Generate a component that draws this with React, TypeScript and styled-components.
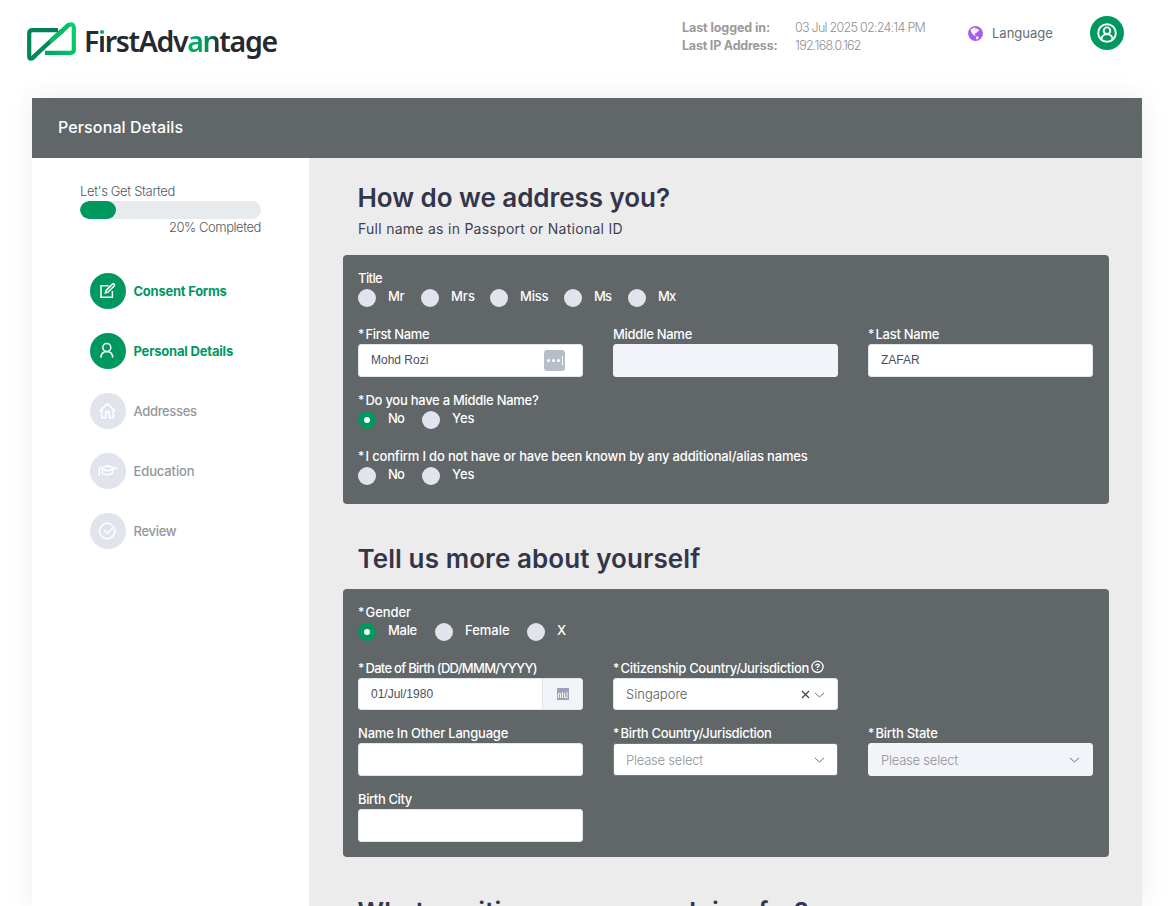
import React from 'react';
import styled, { createGlobalStyle, css } from 'styled-components';

const GREEN = '#00985f';
const SLATE = '#616668';
const MUTED = '#e1e4ec';

const GlobalStyle = createGlobalStyle`
  * { box-sizing: border-box; }
  body {
    margin: 0;
    height: 906px;
    overflow: hidden;
    background: #fff;
    font-family: Inter, "Liberation Sans", sans-serif;
    font-size: 13px;
    color: #646c75;
  }
`;

/* Text run with adjustable tracking */
const Text = styled.span<{ $ls?: number }>`
  white-space: nowrap;
  letter-spacing: ${p => p.$ls ?? 0}px;
`;

const Header = styled.header`
  display: flex;
  align-items: flex-start;
  height: 98px;
  padding: 16px 47px 0 27px;
`;

const Brand = styled.div`
  display: flex;
  align-items: flex-start;
  margin-top: 6px;
  svg { display: block; }
`;

const Wordmark = styled.div`
  margin-left: 7px;
  font-family: "Noto Sans", sans-serif;
  font-size: 28.5px;
  font-weight: 600;
  line-height: 39px;
  letter-spacing: -1.35px;
  color: #26292f;
  white-space: nowrap;
`;

const DottedI = styled.span`
  background: linear-gradient(to bottom, #00b164 0 13px, #26292f 13px);
  background-clip: text;
  color: transparent;
`;

const GreenPair = styled.span`
  background: linear-gradient(to right, #00b45f, #00935b 65%, #26292f);
  background-clip: text;
  color: transparent;
`;

const Session = styled.dl`
  display: grid;
  grid-template-columns: 113px 137px;
  margin: 3px 0 0 auto;
  line-height: 18px;
  dt { font-weight: 700; color: #9a9a9a; margin: 0; font-size: 12.5px; }
  dd { font-weight: 300; color: #8f8f8f; margin: 0; font-size: 12.5px; }
`;

const LanguageLink = styled.div`
  display: flex;
  align-items: center;
  gap: 9px;
  width: 122px;
  height: 34px;
  margin-left: 36px;
`;

const Avatar = styled.div`
  display: flex;
  align-items: center;
  justify-content: center;
  width: 34px;
  height: 34px;
  border-radius: 50%;
  background: ${GREEN};
`;

const Card = styled.main`
  width: 1110px;
  height: 808px;
  margin-left: 32px;
  box-shadow: 0 0 24px rgba(60, 60, 70, 0.09);
`;

const TitleBar = styled.div`
  display: flex;
  align-items: center;
  height: 60px;
  padding: 0 26px 2px;
  background: ${SLATE};
  color: #fff;
  font-size: 16px;
  font-weight: 500;
`;

const Columns = styled.div`
  display: flex;
  height: 748px;
  overflow: hidden;
`;

const Sidebar = styled.aside`
  width: 277px;
  padding: 25px 48px 0;
  background: #fff;
`;

const Progress = styled.div`
  display: flex;
  flex-direction: column;
  font-weight: 300;
  line-height: 16px;
  color: #55585c;
  & > span { height: 18px; }
  & > :last-child { align-self: flex-end; }
`;

const Track = styled.div`
  height: 18px;
  border-radius: 9px;
  background: #e8ebee;
  overflow: hidden;
`;

const Fill = styled.div`
  width: 20%;
  height: 100%;
  border-radius: 9px;
  background: ${GREEN};
`;

const Steps = styled.nav`
  display: flex;
  flex-direction: column;
  gap: 24px;
  margin: 36px 0 0 10px;
`;

const Step = styled.a<{ $done?: boolean }>`
  display: flex;
  align-items: center;
  gap: 7.5px;
  height: 36px;
  color: ${p => (p.$done ? GREEN : '#93979c')};
  font-weight: ${p => (p.$done ? 650 : 500)};
  & > :last-child { padding-bottom: 1px; }
`;

const StepDot = styled.span<{ $done?: boolean }>`
  display: flex;
  align-items: center;
  justify-content: center;
  width: 36px;
  height: 36px;
  border-radius: 50%;
  background: ${p => (p.$done ? GREEN : MUTED)};
`;

const Content = styled.section`
  flex: 1;
  padding: 20px 33px 0 34px;
  background: #ececec;
`;

const Heading = styled.h2<{ $gapTop?: boolean }>`
  margin: ${p => (p.$gapTop ? 35 : 0)}px 0 ${p => (p.$gapTop ? 11 : 0)}px 14.5px;
  font-size: 26px;
  font-weight: 600;
  line-height: 39px;
  color: #33364a;
`;

const SubHeading = styled.p`
  margin: 0 0 15px 15px;
  font-size: 14px;
  line-height: 23px;
  color: #3f4254;
`;

const Panel = styled.div`
  padding: 15px 15px 0;
  border-radius: 4px;
  background: ${SLATE};
`;

const Row = styled.div`
  display: grid;
  grid-template-columns: repeat(3, 225px);
  column-gap: 30px;
  padding-bottom: 15px;
`;

const Field = styled.div`
  display: flex;
  flex-direction: column;
`;

const Label = styled.label`
  display: flex;
  height: 18px;
  line-height: 16px;
  color: #fff;
  font-weight: 500;
  white-space: nowrap;
  svg { margin-left: 2px; flex: none; }
`;

const Star = styled.span`
  width: 7.5px;
  flex: none;
  font-size: 12px;
`;

const Options = styled.div`
  display: flex;
  height: 20px;
  margin-bottom: 18px;
`;

const Option = styled.div<{ $w: number }>`
  display: flex;
  gap: 12px;
  width: ${p => p.$w}px;
  line-height: 16px;
  color: #fff;
  font-weight: 500;
`;

const Radio = styled.span<{ $on?: boolean }>`
  display: flex;
  align-items: center;
  justify-content: center;
  width: 18px;
  height: 18px;
  margin-top: 1px;
  border-radius: 50%;
  background: ${p => (p.$on ? GREEN : MUTED)};
  ${p => p.$on && css`
    &::after {
      content: "";
      width: 6px;
      height: 6px;
      border-radius: 50%;
      background: #fff;
    }
  `}
`;

const Box = styled.div<{ $h?: number; $off?: boolean; $focus?: boolean; $sans?: boolean }>`
  display: flex;
  align-items: center;
  height: ${p => p.$h ?? 33}px;
  padding: 0 12px;
  border: 1px solid ${p => (p.$focus ? '#7a67c8' : p.$off ? '#f3f4f9' : '#e2e5ec')};
  border-radius: 3px;
  background: ${p => (p.$off ? '#f3f4f9' : '#fff')};
  color: #495057;
  ${p => p.$sans && css`
    padding-bottom: 2px;
    font-family: "Liberation Sans", Arial, sans-serif;
    font-size: 12px;
  `}
`;

const Value = styled(Text)<{ $dim?: boolean }>`
  flex: 1;
  font-weight: 300;
  color: ${p => (p.$dim ? '#8f9297' : '#55585d')};
`;

const AutofillBadge = styled.span`
  display: flex;
  align-items: center;
  justify-content: center;
  gap: 2px;
  width: 21px;
  height: 21px;
  margin: 1px 5px 0 auto;
  border-radius: 3px;
  background: #b8bec9;
  i { width: 3px; height: 3px; border-radius: 50%; background: #fff; }
  b { width: 1px; height: 9px; background: #fff; }
`;

const DateGroup = styled.div`
  display: flex;
  height: 32px;
  border: 1px solid #e2e5ec;
  border-radius: 3px;
  background: #fff;
  overflow: hidden;
`;

const DateValue = styled.div`
  flex: 1;
  padding-left: 12px;
  font-family: "Liberation Sans", Arial, sans-serif;
  font-size: 12px;
  line-height: 30px;
  color: #495057;
`;

const DateButton = styled.div`
  display: flex;
  align-items: center;
  justify-content: center;
  width: 40px;
  border-left: 1px solid #e2e5ec;
  background: #f3f4f9;
`;

const Logo = () => (
  <svg width="50" height="40" viewBox="0 0 50 40" fill="none" strokeWidth="4.2" strokeLinejoin="round">
    <defs>
      <linearGradient id="dk" x1="0" y1="1" x2="1" y2="0">
        <stop offset="0" stopColor="#008a5b" />
        <stop offset="1" stopColor="#007f5a" />
      </linearGradient>
      <linearGradient id="lt" x1="0" y1="1" x2="1" y2="0">
        <stop offset="0" stopColor="#00a562" />
        <stop offset="0.5" stopColor="#00c565" />
        <stop offset="1" stopColor="#0ad06b" />
      </linearGradient>
    </defs>
    <path d="M31 8.2H5.2Q2.2 8.2 2.2 11.2V34.5Q2.2 37.5 5 36.4L9 33.2" stroke="url(#dk)" />
    <path d="M18 30.8H43.5Q46.8 30.8 46.8 27.5V5.5Q46.3 .9 41.6 2.8L31 13" stroke="url(#lt)" />
    <path d="M4.4 36.9L35 8.6" stroke="#008a5b" />
    <path d="M23 19.7L42 2.6" stroke="#00c063" />
  </svg>
);

const line = { fill: 'none', stroke: '#fff', strokeWidth: 1.5 } as const;

const EditIcon = () => (
  <svg width="18" height="18" viewBox="0 0 18 18" {...line}>
    <path d="M9.6 3.8H2V15.2H13.4V9" />
    <path d="M6.4 11L7 8.4L13.6 1.9Q14.4 1.4 15.2 2.1Q16 2.9 15.4 3.7L8.9 10.2Z" />
  </svg>
);
const UserIcon = () => (
  <svg width="18" height="18" viewBox="0 0 18 18" {...line}>
    <circle cx="7.8" cy="5.5" r="4" />
    <path d="M1.9 15.6Q2.2 9.6 7.8 9.5Q13.4 9.6 13.7 15.6" />
  </svg>
);
const HomeIcon = () => (
  <svg width="18" height="18" viewBox="0 0 18 18" {...line}>
    <path d="M.6 9.3L8.4 1.6L16.2 9.3M2.8 7.6V15.7H6.8V9.8H10.2V15.7H14.2V7.6" />
  </svg>
);
const CapIcon = () => (
  <svg width="20" height="18" viewBox="0 0 20 18" {...line}>
    <path d="M1.2 14V6.2L9.3 3.9L18.2 6.2L9.5 8.6L4.2 7M4.2 7V11.3Q9.5 14.3 14.4 11.3V7.4" />
  </svg>
);
const CheckIcon = () => (
  <svg width="18" height="18" viewBox="0 0 18 18" {...line}>
    <path d="M15.6 6.6A7.7 7.7 0 1 1 13.4 3.2" />
    <path d="M5 7.9L8.4 11.4L15.8 4" />
  </svg>
);
const AvatarIcon = () => (
  <svg width="20" height="20" viewBox="0 0 20 20" fill="none" stroke="#fff" strokeWidth="1.9">
    <circle cx="10" cy="10" r="8.8" />
    <circle cx="10" cy="7.7" r="3.3" />
    <path d="M4.4 15.8Q5.4 11.2 10 11.1Q14.6 11.2 15.6 15.8" />
  </svg>
);
const GlobeIcon = () => (
  <svg width="15" height="15" viewBox="0 0 15 15">
    <circle cx="7.5" cy="7.5" r="7.4" fill="#a95cea" />
    <path d="M2.8 3.4L5 2.2L7 1.3L7.6 2.4L6.8 3.4L8.4 2.6L10.4 3.4L11 5L9.4 5.8L8.2 7L7 7.4L6.6 8.4L7.8 9.8L6 9.4L4.2 7.6L3 5.6Z" fill="#fff" />
    <path d="M7.8 10.4L9.8 10.4L11 11.6L9.6 13.3L8.4 13.6Z" fill="#fff" />
  </svg>
);
const HelpIcon = () => (
  <svg width="13" height="13" viewBox="0 0 13 13" fill="none" stroke="#fff" strokeWidth="1.3">
    <circle cx="6.5" cy="6.8" r="5.6" />
    <path d="M4.7 5.7Q4.8 4.1 6.5 4.1Q8.3 4.2 8.2 5.6Q8.1 6.4 6.5 7.1V8M6.5 8.9V10.2" />
  </svg>
);
const Chevron = () => (
  <svg width="11" height="7" viewBox="0 0 11 7" fill="none" stroke="#6c7177" strokeWidth="1">
    <path d="M1 1.9L5.5 6L10 1.9" />
  </svg>
);
const ClearMark = styled.svg`
  margin-right: 4px;
`;
const ClearIcon = () => (
  <ClearMark width="9" height="9" viewBox="0 0 9 9" fill="none" stroke="#3c4248" strokeWidth="1.2">
    <path d="M1 1L8 8M8 1L1 8" />
  </ClearMark>
);
const CalendarIcon = () => (
  <svg width="12" height="12" viewBox="0 0 12 12">
    <rect width="12" height="12" fill="#a19fbd" />
    <path d="M1.5 10V5.5H3.5V10M5.5 4V10M7.5 5V9.5H10V4" fill="none" stroke="#e9fbe9" />
  </svg>
);

const Caption = ({ required, ls = -0.27, children, help }: { required?: boolean; ls?: number; children: React.ReactNode; help?: boolean }) => (
  <Label>
    {required && <Star>*</Star>}
    <Text $ls={ls}>{children}</Text>
    {help && <HelpIcon />}
  </Label>
);

type Opt = { label: string; w: number; on?: boolean; ls?: number };
const Choice = ({ label, required, ls, options }: { label: string; required?: boolean; ls?: number; options: Opt[] }) => (
  <Field>
    <Caption required={required} ls={ls}>{label}</Caption>
    <Options>
      {options.map(o => (
        <Option key={o.label} $w={o.w}>
          <Radio $on={o.on} />
          <Text $ls={o.ls}>{o.label}</Text>
        </Option>
      ))}
    </Options>
  </Field>
);

const steps = [
  { label: 'Consent Forms', icon: <EditIcon />, done: true, ls: -0.25 },
  { label: 'Personal Details', icon: <UserIcon />, done: true, ls: -0.2 },
  { label: 'Addresses', icon: <HomeIcon />, ls: -0.35 },
  { label: 'Education', icon: <CapIcon />, ls: -0.12 },
  { label: 'Review', icon: <CheckIcon />, ls: -0.3 },
];

const titles: Opt[] = [
  { label: 'Mr', w: 63, ls: -0.4 },
  { label: 'Mrs', w: 69 },
  { label: 'Miss', w: 74, ls: -0.2 },
  { label: 'Ms', w: 64, ls: -0.9 },
  { label: 'Mx', w: 64, ls: -0.9 },
];

const genders: Opt[] = [
  { label: 'Male', w: 77, on: true, ls: -0.3 },
  { label: 'Female', w: 92 },
  { label: 'X', w: 60 },
];

export default function App() {
  return (
    <>
      <GlobalStyle />
      <Header>
        <Brand>
          <Logo />
          <Wordmark>F<DottedI>i</DottedI>rstAdv<GreenPair>an</GreenPair>tage</Wordmark>
        </Brand>
        <Session>
          <dt><Text $ls={-0.08}>Last logged in:</Text></dt>
          <dd><Text $ls={-0.73}>03 Jul 2025 02:24:14 PM</Text></dd>
          <dt><Text $ls={-0.2}>Last IP Address:</Text></dt>
          <dd><Text $ls={-0.75}>192.168.0.162</Text></dd>
        </Session>
        <LanguageLink><GlobeIcon /><Text>Language</Text></LanguageLink>
        <Avatar><AvatarIcon /></Avatar>
      </Header>
      <Card>
        <TitleBar><Text $ls={0.12}>Personal Details</Text></TitleBar>
        <Columns>
          <Sidebar>
            <Progress>
              <Text $ls={-0.35}>Let's Get Started</Text>
              <Track><Fill /></Track>
              <Text $ls={-0.45}>20% Completed</Text>
            </Progress>
            <Steps>
              {steps.map(s => (
                <Step key={s.label} $done={s.done}>
                  <StepDot $done={s.done}>{s.icon}</StepDot>
                  <Text $ls={s.ls}>{s.label}</Text>
                </Step>
              ))}
            </Steps>
          </Sidebar>
          <Content>
            <Heading><Text $ls={-0.04}>How do we address you?</Text></Heading>
            <SubHeading><Text $ls={0.27}>Full name as in Passport or National ID</Text></SubHeading>
            <Panel>
              <Choice label="Title" ls={-0.6} options={titles} />
              <Row>
                <Field>
                  <Caption required ls={-0.35}>First Name</Caption>
                  <Box $sans>Mohd Rozi<AutofillBadge><i /><i /><i /><b /></AutofillBadge></Box>
                </Field>
                <Field><Caption>Middle Name</Caption><Box $off /></Field>
                <Field><Caption required>Last Name</Caption><Box $sans>ZAFAR</Box></Field>
              </Row>
              <Choice required label="Do you have a Middle Name?" options={[{ label: 'No', w: 64, on: true, ls: -0.8 }, { label: 'Yes', w: 64 }]} />
              <Choice required ls={-0.17} label="I confirm I do not have or have been known by any additional/alias names" options={[{ label: 'No', w: 64, ls: -0.8 }, { label: 'Yes', w: 64 }]} />
            </Panel>
            <Heading $gapTop><Text $ls={0.09}>Tell us more about yourself</Text></Heading>
            <Panel>
              <Choice required label="Gender" ls={-0.05} options={genders} />
              <Row>
                <Field>
                  <Caption required ls={-0.71}>Date of Birth (DD/MMM/YYYY)</Caption>
                  <DateGroup><DateValue>01/Jul/1980</DateValue><DateButton><CalendarIcon /></DateButton></DateGroup>
                </Field>
                <Field>
                  <Caption required help ls={-0.33}>Citizenship Country/Jurisdiction</Caption>
                  <Box $h={32}><Value>Singapore</Value><ClearIcon /><Chevron /></Box>
                </Field>
              </Row>
              <Row>
                <Field><Caption ls={-0.2}>Name In Other Language</Caption><Box /></Field>
                <Field><Caption required ls={-0.31}>Birth Country/Jurisdiction</Caption><Box $focus><Value $dim $ls={-0.22}>Please select</Value><Chevron /></Box></Field>
                <Field><Caption required>Birth State</Caption><Box $off><Value $dim $ls={-0.22}>Please select</Value><Chevron /></Box></Field>
              </Row>
              <Row>
                <Field><Caption ls={-0.4}>Birth City</Caption><Box /></Field>
              </Row>
            </Panel>
            <Heading $gapTop><Text $ls={0.17}>What position are you applying for?</Text></Heading>
          </Content>
        </Columns>
      </Card>
    </>
  );
}
